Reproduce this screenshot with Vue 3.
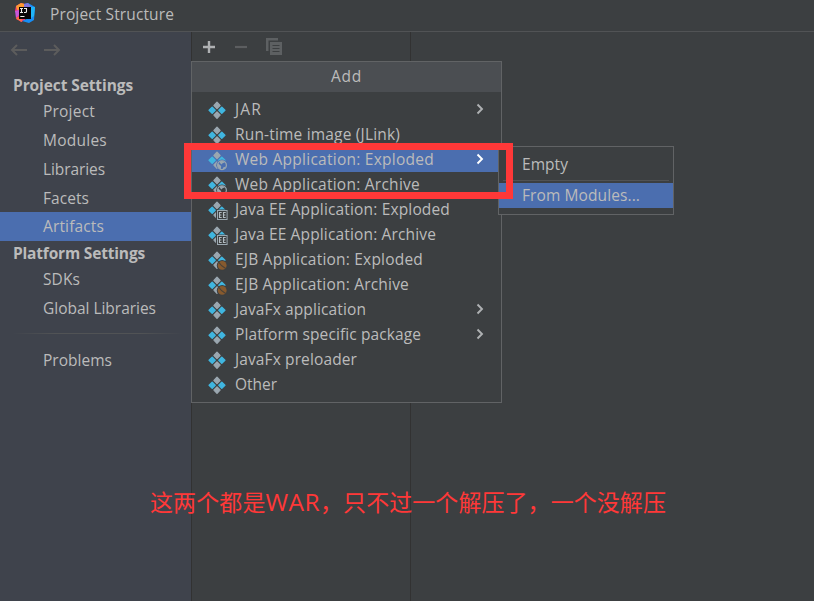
<script setup>
const projectItems = [
  { label: 'Project', width: 52 },
  { label: 'Modules', width: 64 },
  { label: 'Libraries', width: 62 },
  { label: 'Facets', width: 46 },
  { label: 'Artifacts', width: 61, selected: true },
]
const platformItems = [
  { label: 'SDKs', width: 37 },
  { label: 'Global Libraries', width: 113 },
]
const menuItems = [
  { label: 'JAR', width: 27, sub: true },
  { label: 'Run-time image (JLink)', width: 165 },
  { label: 'Web Application: Exploded', width: 199, badge: 'web', sub: true, selected: true },
  { label: 'Web Application: Archive', width: 185, badge: 'web' },
  { label: 'Java EE Application: Exploded', width: 215, badge: 'ee' },
  { label: 'Java EE Application: Archive', width: 201, badge: 'ee' },
  { label: 'EJB Application: Exploded', width: 188, badge: 'ejb' },
  { label: 'EJB Application: Archive', width: 174, badge: 'ejb' },
  { label: 'JavaFx application', width: 131, sub: true },
  { label: 'Platform specific package', width: 186, sub: true },
  { label: 'JavaFx preloader', width: 122 },
  { label: 'Other', width: 42 },
]

// Spreads a label's letters so that it takes exactly the given width.
const vFit = {
  mounted(el, { value }) {
    const natural = el.getBoundingClientRect().width
    el.style.letterSpacing = (value - natural) / el.textContent.length + 'px'
  },
}
</script>

<template>
  <div class="window">
    <header class="titlebar">
      <svg class="logo" width="20" height="20" viewBox="0 0 20 20">
        <path d="M1 3L6 0L13 2L10 17L6 19L1 15L3 11L0 8Z" fill="#f5357f" />
        <path d="M1 3L6 0L10 1L8 6L2 7Z" fill="#fd9a32" />
        <path d="M0 8L4 7L4 12L1 15Z" fill="#c757d8" />
        <path d="M2 14L7 14L7 19L1 16Z" fill="#ff6b43" />
        <path d="M9 1L13 0L20 4L19 17L14 20L7 18L14 15Z" fill="#178ef5" />
        <path d="M9 1L13 0L16 4H9Z" fill="#8173dc" />
        <path d="M16 4L20 4L19 13L16 15Z" fill="#20b5f8" />
        <rect x="4" y="4" width="12" height="12" fill="#080508" />
        <path d="M5 5.5H8M6.5 5.5V9.5M5 9.5H8M9 5.5H11.5V8.5Q11.5 9.5 10.3 9.5H9M5.3 13.5H9.5" fill="none" stroke="#eee" stroke-width="1.1" />
      </svg>
      <span v-fit="124" class="txt">Project Structure</span>
    </header>
    <div class="body">
      <aside class="sidebar">
        <div class="history">
          <svg v-for="d in ['M17 6H2M7 1L2 6L7 11', 'M1 6H16M11 1L16 6L11 11']" :key="d" width="18" height="12" viewBox="0 0 18 12">
            <path :d="d" fill="none" stroke="#5c5c5c" stroke-width="2" />
          </svg>
        </div>
        <div class="heading first"><span v-fit="120" class="txt">Project Settings</span></div>
        <div v-for="i in projectItems" :key="i.label" class="nav" :class="{ selected: i.selected }">
          <span v-fit="i.width" class="txt">{{ i.label }}</span>
        </div>
        <div class="heading"><span v-fit="132" class="txt">Platform Settings</span></div>
        <div v-for="i in platformItems" :key="i.label" class="nav">
          <span v-fit="i.width" class="txt">{{ i.label }}</span>
        </div>
        <div class="divider"></div>
        <div class="nav"><span v-fit="69" class="txt">Problems</span></div>
      </aside>
      <section class="list">
        <div class="tools">
          <svg width="14" height="14" viewBox="0 0 14 14"><path d="M7 1V13M1 7H13" stroke="#afb1b3" stroke-width="2.4" /></svg>
          <svg width="14" height="14" viewBox="0 0 14 14"><path d="M1 7H13" stroke="#5c5e60" stroke-width="2.2" /></svg>
          <svg width="16" height="17" viewBox="0 0 16 17">
            <path d="M0 0H12V2.5H2.5V13H0Z" fill="#5d6062" />
            <path d="M4 4H16V17H4Z" fill="#5d6062" />
            <path d="M6.5 7.5H13.5M6.5 10.5H13.5M6.5 13.5H13.5" stroke="#3c3f41" stroke-width="1.2" />
          </svg>
        </div>
      </section>
      <main class="details"></main>
    </div>

    <div class="menu">
      <div class="menu-title"><span v-fit="31" class="txt">Add</span></div>
      <div class="menu-items">
        <div v-for="i in menuItems" :key="i.label" class="item" :class="{ selected: i.selected }">
          <svg class="artifact" width="20" height="20" viewBox="0 0 20 20">
            <g stroke-width="1.4" stroke-linejoin="round">
              <path d="M9 1.2L12 4.4L9 7.4L6 4.4Z" fill="#9aa7b0" stroke="#9aa7b0" />
              <path d="M9 11L12 14L9 17.2L6 14Z" fill="#9aa7b0" stroke="#9aa7b0" />
              <path d="M4.2 6.2L7.2 9.2L4.2 12.2L1.1 9.2Z" fill="#40b6e0" stroke="#40b6e0" />
              <path d="M13.8 6.2L16.9 9.2L13.8 12.2L10.8 9.2Z" fill="#40b6e0" stroke="#40b6e0" />
            </g>
            <g v-if="i.badge === 'web'">
              <circle cx="14" cy="14.2" r="5.7" :fill="i.selected ? '#4b6eaf' : '#3c3f41'" />
              <circle cx="14" cy="14.2" r="4.4" fill="none" stroke="#9aa7b0" stroke-width="1.2" />
              <path d="M9.8 12.2L12 14L13.2 15.2L12.8 18.4L10.5 17L9.6 14.5ZM14.5 18.4L15.2 16.4L18 15.6L17 17.6ZM11.5 10.4L14 9.8L17 11.2L14.6 12.2L13.4 13.4L12.2 12.2Z" fill="#9aa7b0" />
            </g>
            <g v-if="i.badge === 'ee'">
              <rect x="8" y="8.5" width="12" height="11" fill="#3c3f41" />
              <rect x="9.5" y="9.5" width="9.6" height="9" fill="#3c3f41" stroke="#9aa7b0" />
              <path d="M13.7 11.5H11.5V16.5H13.7M11.5 14H13.4M17.7 11.5H15.5V16.5H17.7M15.5 14H17.4" fill="none" stroke="#b2bbc1" stroke-width="1.1" />
            </g>
            <g v-if="i.badge === 'ejb'">
              <circle cx="14.2" cy="14.4" r="5.4" fill="#3c3f41" />
              <circle cx="14.2" cy="14.4" r="4.4" fill="#875a2e" />
              <path d="M10.5 11Q13 15 18 17.8" fill="none" stroke="#4a4239" stroke-width="1.1" />
            </g>
          </svg>
          <span v-fit="i.width" class="txt">{{ i.label }}</span>
          <svg v-if="i.sub" class="chevron" width="8" height="12" viewBox="0 0 8 12">
            <path d="M1.5 1.5L6 6L1.5 10.5" fill="none" :stroke="i.selected ? '#fff' : '#afb1b3'" stroke-width="1.9" />
          </svg>
        </div>
      </div>
    </div>

    <div class="submenu">
      <div class="sub-item empty"><span v-fit="46" class="txt">Empty</span></div>
      <div class="sub-divider"></div>
      <div class="sub-item selected"><span v-fit="118" class="txt">From Modules...</span></div>
    </div>

    <div class="marker"></div>
    <div class="note">
      <span v-fit="115.5" class="txt">这两个都是</span><span v-fit="54.5" class="txt latin">WAR</span><span v-fit="346" class="txt">，只不过一个解压了，一个没解压</span>
    </div>
  </div>
</template>

<style>
body { background: #3c3f41; overflow: hidden; }
</style>

<style scoped>
.window {
  position: relative;
  display: flex;
  flex-direction: column;
  box-sizing: border-box;
  width: 814px;
  height: 601px;
  overflow: hidden;
  background: #3c3f41;
  color: #bbbbbb;
  font: 15.5px/20px "Open Sans", "Noto Sans", sans-serif;
}
.txt { display: inline-block; white-space: nowrap; flex: none; }
.titlebar {
  display: flex;
  align-items: center;
  box-sizing: border-box;
  height: 32px;
  padding: 0 0 3px 15px;
  border-bottom: 1px solid #515355;
}
.logo { margin: 0 15px 2px 0; }
.body { display: flex; flex: 1; }
.sidebar { width: 191px; background: #3f434c; }
.history { display: flex; gap: 15px; padding: 12px 0 0 10px; height: 28px; }
.heading {
  display: flex;
  align-items: center;
  height: 24px;
  padding-left: 13px;
  font-weight: 700;
}
.heading.first { box-sizing: border-box; height: 25px; padding-top: 1px; }
.nav { display: flex; align-items: center; height: 28.8px; padding-left: 43px; }
.nav.selected { box-sizing: border-box; padding-bottom: 2px; }
.selected { background: #4b6eaf; }
.divider {
  height: 1px;
  margin: 10px 8px 12px 12px;
  background: linear-gradient(90deg, transparent, #515355 25%, #515355 75%, transparent);
}
.list {
  box-sizing: border-box;
  width: 220px;
  border-left: 1px solid #323232;
  border-right: 1px solid #323232;
}
.tools { display: flex; align-items: center; gap: 18px; padding: 6px 0 0 10px; }
.details { flex: 1; }
.menu {
  position: absolute;
  left: 191px;
  top: 61px;
  box-sizing: border-box;
  width: 311px;
  height: 342px;
  border: 1px solid #616365;
  background: #3c3f41;
}
.menu-title {
  display: flex;
  align-items: center;
  justify-content: center;
  box-sizing: border-box;
  height: 30px;
  padding-bottom: 2px;
  background: #4b4e52;
}
.menu-items { padding-top: 5px; }
.item { display: flex; align-items: center; height: 25px; padding: 0 17px 0 16px; }
.item .txt { padding-bottom: 2px; }
.artifact { margin: 3px 7px 0 0; }
.chevron { margin: 0 0 1px auto; }
.submenu {
  position: absolute;
  left: 498px;
  top: 146px;
  box-sizing: border-box;
  width: 176px;
  height: 69px;
  border: 1px solid #616365;
  background: #3c3f41;
}
.sub-item { display: flex; align-items: center; box-sizing: border-box; height: 25px; padding: 0 0 1px 23px; }
.sub-item.empty { height: 31px; padding: 2px 0 0 23px; }
.sub-divider { height: 1px; margin: 2px 4px; background: #515355; }
.marker {
  position: absolute;
  left: 184px;
  top: 143px;
  box-sizing: border-box;
  width: 329px;
  height: 56px;
  border: 7px solid #ff3838;
}
.note {
  position: absolute;
  left: 150px;
  top: 485px;
  display: flex;
  align-items: baseline;
  color: #ff3838;
  font: 23px/34px "Open Sans", "Noto Sans CJK SC", sans-serif;
}
.latin { font-size: 24.5px; }
</style>
